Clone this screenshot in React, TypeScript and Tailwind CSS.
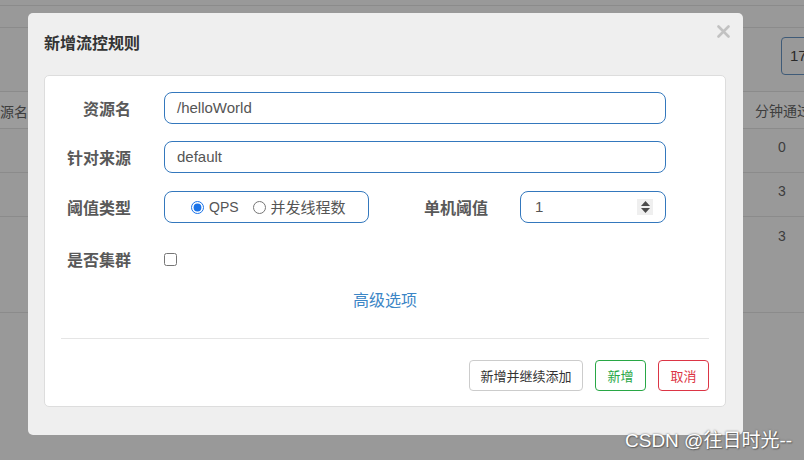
import React from "react";

const FONT = { fontFamily: '"Liberation Sans", Arial, "Noto Sans CJK SC", sans-serif' };
const CJK = { fontFamily: '"Noto Sans CJK SC", sans-serif' };

function Spinner() {
  return (
    <div className="w-[16px] h-[16px] bg-[#efefef] flex flex-col items-center justify-center gap-[2px]">
      <svg width="9" height="5" viewBox="0 0 9 5"><path d="M0 5 L4.5 0 L9 5 Z" fill="#4a4a4a" /></svg>
      <svg width="9" height="5" viewBox="0 0 9 5"><path d="M0 0 L4.5 5 L9 0 Z" fill="#4a4a4a" /></svg>
    </div>
  );
}

export default function App() {
  return (
    <div className="relative w-[804px] h-[460px] overflow-hidden bg-[#999999]" style={FONT}>
      {/* background page */}
      <div className="flex flex-col">
        <div className="h-[6px] border-b border-[#8b8b8b]" />
        <div className="h-[22px] border-b border-[#8b8b8b]" />
        <div className="h-[64px] border-b border-[#8b8b8b] flex justify-end items-start pt-[9px]">
          <div className="w-[40px] h-[38px] mr-[-17px] border border-[#3f5b78] rounded-[4px] pl-[8px] flex items-center text-[15px] text-[#2a2a2a]">17</div>
        </div>
        <div className="flex items-start border-b border-[#8b8b8b] h-[37px] bg-[#9c9c9c]">
          <div className="w-[28px] overflow-hidden whitespace-nowrap text-[14px] text-[#3d3d3d] pt-[9px] flex justify-end" style={CJK}>资源名</div>
          <div className="flex-1" />
          <div className="w-[61px] whitespace-nowrap overflow-hidden text-[14px] text-[#3d3d3d] pt-[8px] pl-[12px]" style={CJK}>分钟通过</div>
        </div>
        <div className="h-[44px] border-b border-[#8b8b8b] flex justify-end"><div className="w-[61px] pl-[35px] pt-[8px] text-[14px] text-[#3d3d3d]">0</div></div>
        <div className="h-[44px] border-b border-[#8b8b8b] flex justify-end"><div className="w-[61px] pl-[35px] pt-[8px] text-[14px] text-[#3d3d3d]">3</div></div>
        <div className="h-[96px] border-b border-[#8b8b8b] flex justify-end"><div className="w-[61px] pl-[35px] pt-[9px] text-[14px] text-[#3d3d3d]">3</div></div>
      </div>

      {/* modal */}
      <div className="absolute left-[28px] top-[13px] w-[715px] h-[422px] bg-[#efefef] rounded-[5px] flex flex-col pl-[16px] pr-[17px]">
        <div className="h-[62px] flex items-center justify-between">
          <div className="text-[16px] font-bold text-[#333333] mt-[-5px]" style={CJK}>新增流控规则</div>
          <svg width="13" height="13" viewBox="0 0 13 13" className="mr-[-4px] mt-[-26px]">
            <path d="M1.5 1.5 L11.5 11.5 M11.5 1.5 L1.5 11.5" stroke="#c2c2c2" strokeWidth="2.6" strokeLinecap="round" />
          </svg>
        </div>

        <div className="h-[332px] bg-white border border-[#dddddd] rounded-[5px] flex flex-col pt-[16px]">
          {/* row 1 */}
          <div className="flex items-center h-[32px]">
            <div className="w-[86px] text-right text-[16px] font-bold text-[#595959]" style={CJK}>资源名</div>
            <div className="ml-[33px] w-[502px] h-[32px] border border-[#3478bd] rounded-[8px] flex items-center pl-[12px] text-[15px] text-[#555555]">/helloWorld</div>
          </div>
          {/* row 2 */}
          <div className="flex items-center h-[32px] mt-[17px]">
            <div className="w-[86px] text-right text-[16px] font-bold text-[#595959]" style={CJK}>针对来源</div>
            <div className="ml-[33px] w-[502px] h-[32px] border border-[#3478bd] rounded-[8px] flex items-center pl-[12px] text-[15px] text-[#555555]">default</div>
          </div>
          {/* row 3 */}
          <div className="flex items-center h-[32px] mt-[18px]">
            <div className="w-[86px] text-right text-[16px] font-bold text-[#595959]" style={CJK}>阈值类型</div>
            <div className="ml-[33px] w-[205px] h-[32px] border border-[#3478bd] rounded-[8px] flex items-center pl-[26px] text-[14px] text-[#555555]">
              <input type="radio" name="t" defaultChecked className="w-[13px] h-[13px] accent-[#1a73e8]" />
              <span className="ml-[5px]">QPS</span>
              <input type="radio" name="t" className="w-[13px] h-[13px] ml-[14px]" />
              <span className="ml-[5px] text-[15px]" style={CJK}>并发线程数</span>
            </div>
            <div className="w-[119px] text-right text-[16px] font-bold text-[#595959]" style={CJK}>单机阈值</div>
            <div className="ml-[32px] w-[146px] h-[32px] border border-[#3478bd] rounded-[8px] flex items-center justify-between pl-[14px] pr-[12px] text-[15px] text-[#555555]">
              <span>1</span>
              <Spinner />
            </div>
          </div>
          {/* row 4 */}
          <div className="flex items-center h-[32px] mt-[20px]">
            <div className="w-[86px] text-right text-[16px] font-bold text-[#595959]" style={CJK}>是否集群</div>
            <input type="checkbox" className="ml-[33px] w-[13px] h-[13px]" />
          </div>
          {/* link */}
          <div className="flex justify-center mt-[12px] h-[24px] items-center">
            <span className="text-[16px] text-[#3c86c6]" style={CJK}>高级选项</span>
          </div>
          {/* divider */}
          <div className="mx-[16px] mt-[27px] border-t border-[#e5e5e5]" />
          {/* buttons */}
          <div className="flex justify-end gap-[12px] pr-[16px] mt-[21px]">
            <div className="h-[31px] w-[114px] border border-[#cccccc] rounded-[4px] flex items-center justify-center text-[13px] text-[#333333]" style={CJK}>新增并继续添加</div>
            <div className="h-[31px] w-[51px] border border-[#28a745] rounded-[4px] flex items-center justify-center text-[13px] text-[#28a745]" style={CJK}>新增</div>
            <div className="h-[31px] w-[51px] border border-[#dc3545] rounded-[4px] flex items-center justify-center text-[13px] text-[#dc3545]" style={CJK}>取消</div>
          </div>
        </div>
      </div>

      {/* watermark */}
      <div className="absolute left-[625px] top-[427px] text-[19px] text-white whitespace-nowrap" style={{ fontFamily: '"Liberation Sans", "Noto Sans CJK SC", sans-serif', textShadow: "0 0 2px #555, 1px 1px 1px #666" }}>
        CSDN @往日时光--
      </div>
    </div>
  );
}
